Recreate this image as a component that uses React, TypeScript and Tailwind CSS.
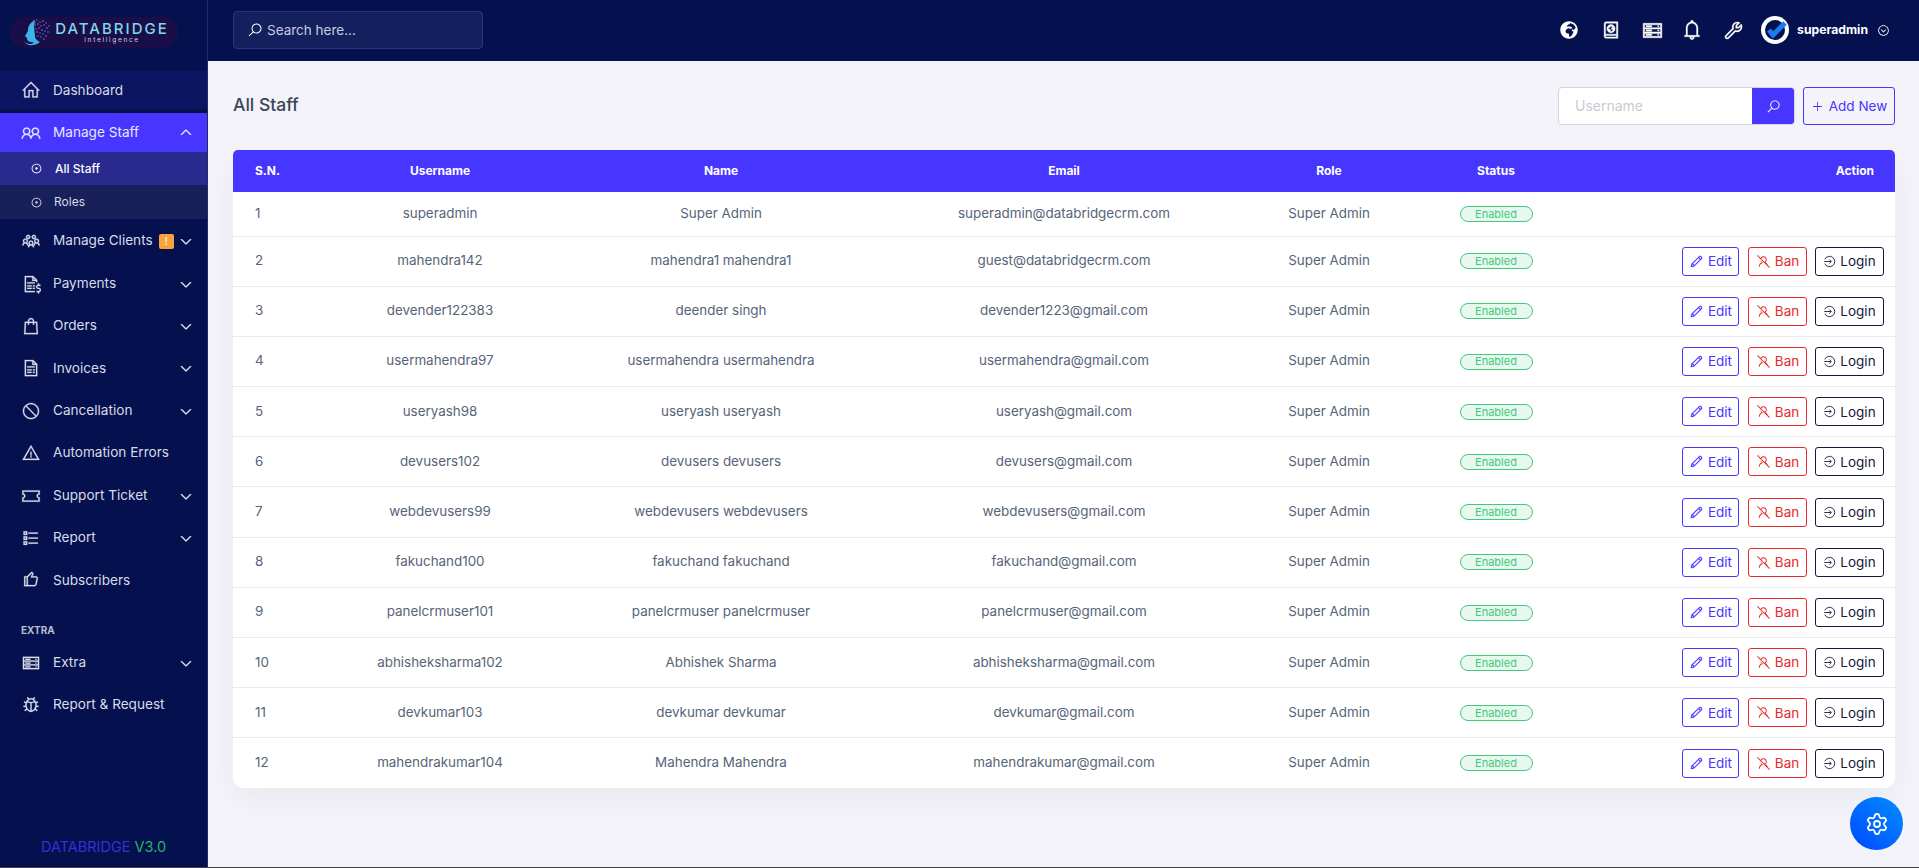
import React from "react";
import {
  LiaHomeSolid, LiaUserFriendsSolid, LiaUsersSolid, LiaFileInvoiceDollarSolid, LiaShoppingBagSolid,
  LiaFileInvoiceSolid, LiaBanSolid, LiaExclamationTriangleSolid, LiaTicketAltSolid, LiaListSolid,
  LiaThumbsUpSolid, LiaServerSolid, LiaBugSolid, LiaAngleDownSolid, LiaAngleUpSolid, LiaDotCircle,
  LiaSearchSolid, LiaAtlasSolid, LiaBellSolid, LiaWrenchSolid, LiaChevronCircleDownSolid,
  LiaPlusSolid, LiaPenSolid, LiaUserSlashSolid,
} from "react-icons/lia";
import { FaGlobeAfrica } from "react-icons/fa";
import { Settings } from "lucide-react";

const font = "font-['Inter','Liberation_Sans',sans-serif]";

const rows = [
  ["superadmin", "Super Admin", "superadmin@databridgecrm.com"],
  ["mahendra142", "mahendra1 mahendra1", "guest@databridgecrm.com"],
  ["devender122383", "deender singh", "devender1223@gmail.com"],
  ["usermahendra97", "usermahendra usermahendra", "usermahendra@gmail.com"],
  ["useryash98", "useryash useryash", "useryash@gmail.com"],
  ["devusers102", "devusers devusers", "devusers@gmail.com"],
  ["webdevusers99", "webdevusers webdevusers", "webdevusers@gmail.com"],
  ["fakuchand100", "fakuchand fakuchand", "fakuchand@gmail.com"],
  ["panelcrmuser101", "panelcrmuser panelcrmuser", "panelcrmuser@gmail.com"],
  ["abhisheksharma102", "Abhishek Sharma", "abhisheksharma@gmail.com"],
  ["devkumar103", "devkumar devkumar", "devkumar@gmail.com"],
  ["mahendrakumar104", "Mahendra Mahendra", "mahendrakumar@gmail.com"],
];

function LoginIcon({ className }: { className?: string }) {
  return (
    <svg viewBox="0 0 16 16" fill="none" stroke="currentColor" strokeWidth="1.1" className={className}>
      <path d="M2.2 5.4A6.4 6.4 0 1 1 2.2 10.6" />
      <path d="M1.5 8h8.5M7.8 5.6 10.2 8 7.8 10.4" />
    </svg>
  );
}

function NavItem({ icon: Icon, label, chevron, badge }: { icon: any; label: string; chevron?: boolean; badge?: boolean }) {
  return (
    <div className="flex h-[42.4px] items-center pl-[21px] pr-[15px] text-[#d8dbe8]">
      <Icon className="h-[20px] w-[20px] shrink-0" strokeWidth={0.4} />
      <span className="ml-[12px] text-[13.6px] leading-none">{label}</span>
      {badge && (
        <span className="ml-[6px] flex h-[15px] w-[15px] items-center justify-center rounded-[2px] bg-[#f7a23b] text-[10px] text-white">!</span>
      )}
      {chevron && <LiaAngleDownSolid className="ml-auto h-[12px] w-[12px] text-white" strokeWidth={1.6} />}
    </div>
  );
}

function Logo() {
  return (
    <div className="flex h-[31px] w-[168px] items-center rounded-full bg-[#1a0e48] pl-[12px]">
      <svg width="29" height="28" viewBox="0 0 29 28" className="shrink-0">
        <path d="M10 3C6 6 6 10 6 12L3 17c0 1 2 1 2 2 0 3 2 4 5 4l2 1c-4 2-8 1-10-2 2 5 10 6 16 1-2-1-4-2-5-5 0-6-2-10 0-17Z" fill="#3cb4ea" />
        {[[12,2],[15,1],[18,3],[21,2],[24,4],[13,6],[16,5],[19,7],[22,6],[25,9],[14,10],[17,9],[20,11],[23,12],[26,13],[15,13],[18,14],[21,15],[24,17],[16,17],[19,18],[22,20],[13,4],[27,7]].map(([x,y],i)=>(
          <circle key={i} cx={x} cy={y} r="0.8" fill={i%3===0?"#b06ad8":"#5a78d8"} />
        ))}
      </svg>
      <div className="ml-[8px] flex w-[106px] flex-col items-center">
        <span className="text-[15px] font-medium leading-[15px] tracking-[2px] text-[#7fd6ee]">DATABRIDGE</span>
        <span className="text-[6.5px] leading-[8px] tracking-[1.7px] text-[#cfd3e6]">Intelligence</span>
      </div>
    </div>
  );
}

function Sidebar() {
  return (
    <aside className="flex w-[208px] shrink-0 flex-col border-r border-[#232d68] bg-[#05104f]">
      <div className="flex h-[71px] items-start pl-[10px] pt-[17px]"><Logo /></div>
      <div className="mb-[4px] flex h-[38px] items-center bg-[#0b1561] pl-[21px] text-[#d8dbe8]">
        <LiaHomeSolid className="h-[20px] w-[20px]" strokeWidth={0.4} />
        <span className="ml-[12px] text-[13.6px]">Dashboard</span>
      </div>
      <div className="flex h-[39px] items-center bg-[#4736ff] pl-[21px] pr-[15px] text-[#e6e6ff]">
        <LiaUserFriendsSolid className="h-[20px] w-[20px]" strokeWidth={0.4} />
        <span className="ml-[12px] text-[13.6px]">Manage Staff</span>
        <LiaAngleUpSolid className="ml-auto h-[12px] w-[12px] text-white" strokeWidth={1.6} />
      </div>
      <div className="flex h-[33px] items-center bg-[#282a8e] pl-[30px] text-[12px] font-medium text-white">
        <LiaDotCircle className="h-[13px] w-[13px]" />
        <span className="ml-[12px]">All Staff</span>
      </div>
      <div className="flex h-[34px] items-center bg-[#172059] pl-[30px] text-[12px] text-[#d8dbe8]">
        <LiaDotCircle className="h-[13px] w-[13px]" />
        <span className="ml-[11px]">Roles</span>
      </div>
      <div className="h-px" />
      <NavItem icon={LiaUsersSolid} label="Manage Clients" chevron badge />
      <NavItem icon={LiaFileInvoiceDollarSolid} label="Payments" chevron />
      <NavItem icon={LiaShoppingBagSolid} label="Orders" chevron />
      <NavItem icon={LiaFileInvoiceSolid} label="Invoices" chevron />
      <NavItem icon={LiaBanSolid} label="Cancellation" chevron />
      <NavItem icon={LiaExclamationTriangleSolid} label="Automation Errors" />
      <NavItem icon={LiaTicketAltSolid} label="Support Ticket" chevron />
      <NavItem icon={LiaListSolid} label="Report" chevron />
      <NavItem icon={LiaThumbsUpSolid} label="Subscribers" />
      <div className="flex h-[40px] items-end pb-[7px] pl-[21px] text-[10px] font-bold leading-none text-[#b9bdcc]">EXTRA</div>
      <NavItem icon={LiaServerSolid} label="Extra" chevron />
      <NavItem icon={LiaBugSolid} label="Report & Request" />
      <div className="mt-auto flex h-[40px] items-center justify-center pb-[1px] text-[14.5px]">
        <span className="text-[#3430d8]">DATABRIDGE</span>
        <span className="ml-[4px] text-[#1fb866]">V3.0</span>
      </div>
    </aside>
  );
}

function Header() {
  return (
    <header className="flex h-[61px] shrink-0 items-center bg-[#05104f] pl-[25px] pr-[29px]">
      <div className="mb-[1px] flex h-[38px] w-[250px] items-center rounded-[4px] border border-[#2a3670] bg-[#141f5e] pl-[13px] text-[13.5px] text-[#c8cde0]">
        <LiaSearchSolid className="h-[16px] w-[16px] text-white" />
        <span className="ml-[4px]">Search here...</span>
      </div>
      <div className="mb-[1px] ml-auto flex items-center text-white">
        <FaGlobeAfrica className="h-[18px] w-[18px]" />
        <LiaAtlasSolid className="ml-[22px] h-[22px] w-[22px]" strokeWidth={0.6} />
        <LiaServerSolid className="ml-[19px] h-[23px] w-[23px]" strokeWidth={0.6} />
        <LiaBellSolid className="ml-[16px] h-[24px] w-[24px]" strokeWidth={0.4} />
        <LiaWrenchSolid className="ml-[18px] h-[23px] w-[23px]" strokeWidth={0.4} />
        <svg width="30" height="30" viewBox="0 0 30 30" className="ml-[15px]">
          <circle cx="15" cy="15" r="14" fill="#fff" />
          <circle cx="15" cy="15" r="10" fill="#05104f" />
          <path d="M9 15l4 5 12-12" fill="none" stroke="#1b7cf0" strokeWidth="5" />
        </svg>
        <span className="ml-[7px] text-[12.2px] font-bold">superadmin</span>
        <LiaChevronCircleDownSolid className="ml-[9px] h-[13px] w-[13px]" />
      </div>
    </header>
  );
}

function ActionBtn({ cls, children, label }: { cls: string; children: React.ReactNode; label: string }) {
  return (
    <button className={`flex h-[29px] items-center justify-center gap-[4px] rounded-[3px] border text-[13.5px] ${cls}`}>
      {children}
      {label}
    </button>
  );
}

function Table() {
  return (
    <div className="overflow-hidden rounded-b-[10px] rounded-t-[5px] bg-white shadow-[0_12px_30px_rgba(50,50,93,0.05)]">
      <table className="w-full table-fixed text-center text-[13.4px] text-[#566478]">
        <colgroup>
          <col className="w-[67px]" />
          <col className="w-[280px]" />
          <col className="w-[282px]" />
          <col className="w-[404px]" />
          <col className="w-[126px]" />
          <col className="w-[208px]" />
          <col />
        </colgroup>
        <thead>
          <tr className="h-[42px] bg-[#4736ff] text-[12px] font-bold text-white">
            <th className="pb-px pl-[22px] text-left">S.N.</th>
            <th className="pb-px">Username</th>
            <th className="pb-px">Name</th>
            <th className="pb-px">Email</th>
            <th className="pb-px">Role</th>
            <th className="pb-px">Status</th>
            <th className="pb-px pr-[21px] text-right">Action</th>
          </tr>
        </thead>
        <tbody>
          {rows.map((r, i) => (
            <tr key={i} className={`border-b border-[#e9ebec] last:border-b-0 ${i === 0 ? "h-[44px]" : "h-[50.2px]"}`}>
              <td className="pb-[2px] pl-[22px] text-left">{i + 1}</td>
              <td className="pb-[2px]">{r[0]}</td>
              <td className="pb-[2px]">{r[1]}</td>
              <td className="pb-[2px]">{r[2]}</td>
              <td className="pb-[2px]">Super Admin</td>
              <td className="pb-[2px]">
                <span className="inline-flex h-[16px] w-[73px] items-center justify-center rounded-full border border-[#3fca7c] bg-[#e8f8ef] text-[11px] text-[#3fca7c]">Enabled</span>
              </td>
              <td className="pr-[11px]">
                {i > 0 && (
                  <div className="flex justify-end">
                    <ActionBtn cls="w-[57px] border-[#4736ff] text-[#4736ff]" label="Edit">
                      <LiaPenSolid className="h-[15px] w-[15px]" strokeWidth={0.5} />
                    </ActionBtn>
                    <ActionBtn cls="ml-[9px] w-[59px] border-[#e62a2a] text-[#e62a2a]" label="Ban">
                      <LiaUserSlashSolid className="h-[15px] w-[15px]" />
                    </ActionBtn>
                    <ActionBtn cls="ml-[8px] w-[69px] border-[#141a3c] text-[#141a3c]" label="Login">
                      <LoginIcon className="h-[13px] w-[13px]" />
                    </ActionBtn>
                  </div>
                )}
              </td>
            </tr>
          ))}
        </tbody>
      </table>
    </div>
  );
}

export default function App() {
  return (
    <div className={`relative flex h-[868px] w-full overflow-hidden border-b border-[#444] bg-[#f3f3f9] ${font}`}>
      <Sidebar />
      <main className="flex min-w-0 flex-1 flex-col">
        <Header />
        <div className="pl-[25px] pr-[24px] pt-[26px]">
          <div className="flex h-[38px] items-center">
            <h1 className="mb-[1px] text-[17.5px] font-medium text-[#3a4658]">All Staff</h1>
            <div className="ml-auto flex h-[38px] w-[237px] overflow-hidden rounded-[4px] border border-[#d3d5dc] bg-white">
              <span className="flex flex-1 items-center pb-[2px] pl-[16px] text-[14px] text-[#c9cbd2]">Username</span>
              <span className="flex w-[42px] items-center justify-center bg-[#4736ff] text-white">
                <LiaSearchSolid className="h-[15px] w-[15px]" />
              </span>
            </div>
            <button className="ml-[8px] flex h-[38px] w-[92px] items-center justify-center rounded-[3px] border border-[#4736ff] text-[13.5px] text-[#4736ff]">
              <LiaPlusSolid className="mr-[5px] h-[13px] w-[13px]" />Add New
            </button>
          </div>
          <div className="mt-[25px]"><Table /></div>
        </div>
      </main>
      <button className="absolute left-[1850px] top-[797px] flex h-[53px] w-[53px] items-center justify-center rounded-full bg-gradient-to-tr from-[#0044ff] to-[#0a8cff] text-white">
        <Settings className="h-[24px] w-[24px]" strokeWidth={1.8} />
      </button>
    </div>
  );
}
